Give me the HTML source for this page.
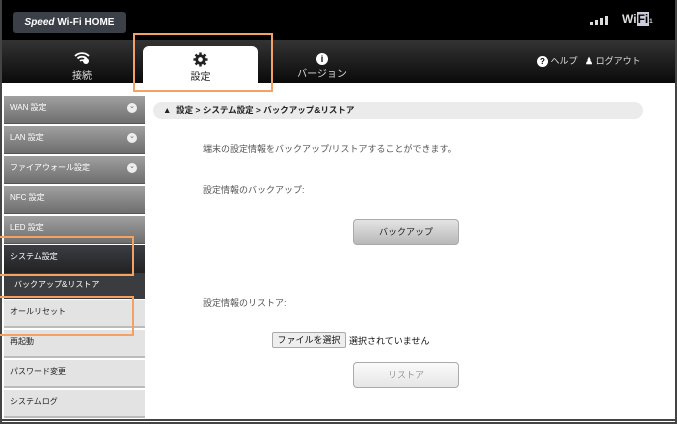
<!DOCTYPE html>
<html><head><meta charset="utf-8"><style>
*{margin:0;padding:0;box-sizing:border-box}
body{width:677px;height:424px;overflow:hidden;background:#fff;font-family:"Liberation Sans","Noto Sans CJK JP",sans-serif;position:relative}
.frame{position:absolute;left:0;top:0;width:677px;height:424px;border:2px solid #444;border-top:none}
.hdr{position:absolute;left:0;top:0;width:677px;height:40px;background:#000}
.logo{position:absolute;left:13px;top:12px;width:113px;height:21px;background:#3a3f48;border-radius:3px;color:#fff;font-size:10px;font-weight:bold;line-height:21px;text-align:center}
.nav{position:absolute;left:0;top:40px;width:677px;height:43px;background:linear-gradient(#333,#0a0a0a)}
.tab{position:absolute;color:#ddd;font-size:10px;text-align:center}
.act{position:absolute;left:143px;top:46px;width:115px;height:39px;background:#fff;border-radius:6px 6px 0 0}
.side{position:absolute;left:4px;width:141px;height:28px;font-size:8px;line-height:24px;padding-left:6px}
.g{background:linear-gradient(#a0a0a0,#6e6e6e);color:#fff;border-bottom:1px solid #555}
.d{background:linear-gradient(#3b3e44,#222);color:#fff}
.l{background:#e3e3e3;color:#222;border-bottom:2px solid #bbb}
.chev{position:absolute;right:8px;top:7px;width:10px;height:10px;border-radius:50%;background:#eee;color:#666;font-size:7px;line-height:8px;text-align:center}
.orange{position:absolute;border:2px solid #f4a264}
.t{position:absolute;font-size:9px;color:#555}
.btn{position:absolute;border:1px solid #aaa;border-radius:4px;font-size:9px;text-align:center}
.bar{position:absolute;background:#ddd;width:3px;bottom:0}
</style></head><body>
<div class="hdr"><div class="logo"><i>Speed</i> Wi-Fi HOME</div>
<div style="position:absolute;left:590px;top:16px;width:18px;height:9px">
<div class="bar" style="left:0;height:3px"></div><div class="bar" style="left:5px;height:5px"></div><div class="bar" style="left:10px;height:7px"></div><div class="bar" style="left:15px;height:9px"></div></div>
<div style="position:absolute;left:622px;top:12px;color:#ddd;font-size:12px;font-weight:bold">Wi<span style="background:#ccd;color:#000;padding:0 1px">Fi</span><span style="font-size:6px">1</span></div>
</div>
<div class="nav">
<div class="tab" style="left:62px;top:10px;width:40px"><svg width="18" height="14" viewBox="0 0 18 14"><path d="M2 6a10 10 0 0 1 14 0M4.5 8.5a6.5 6.5 0 0 1 9 0M7 11a3 3 0 0 1 4 0" stroke="#fff" stroke-width="1.8" fill="none"/><circle cx="13" cy="11" r="3" fill="#fff"/></svg><br>接続</div>
<div class="tab" style="left:292px;top:13px;width:60px"><div style="display:inline-block;width:12px;height:12px;border-radius:50%;background:#fff;color:#000;font-size:9px;font-weight:bold;line-height:12px">i</div><br>バージョン</div>
<div style="position:absolute;left:537px;top:14px;color:#ddd;font-size:9px"><span style="display:inline-block;width:11px;height:11px;border-radius:50%;background:#fff;color:#000;text-align:center;font-weight:bold;line-height:11px;font-size:8px">?</span> ヘルプ &nbsp;&nbsp;<b style="color:#fff">♟</b> ログアウト</div>
</div>
<div class="act"><div style="text-align:center;margin-top:6px;height:15px"><svg width="15" height="15" viewBox="0 0 16 16"><g fill="#222"><circle cx="8" cy="8" r="5.5"/><rect x="6.7" y="0.5" width="2.6" height="15"/><rect x="0.5" y="6.7" width="15" height="2.6"/><rect x="6.7" y="0.5" width="2.6" height="15" transform="rotate(45 8 8)"/><rect x="6.7" y="0.5" width="2.6" height="15" transform="rotate(-45 8 8)"/></g><circle cx="8" cy="8" r="2.5" fill="#fff"/></svg></div><div style="text-align:center;font-size:10px;color:#222;margin-top:1px">設定</div></div>

<div class="side g" style="top:96px">WAN 設定<span class="chev">⌄</span></div>
<div class="side g" style="top:126px">LAN 設定<span class="chev">⌄</span></div>
<div class="side g" style="top:156px">ファイアウォール設定<span class="chev">⌄</span></div>
<div class="side g" style="top:186px">NFC 設定</div>
<div class="side g" style="top:216px">LED 設定</div>
<div class="side d" style="top:245px;height:28px">システム設定</div>
<div class="side d" style="top:273px;height:26px;line-height:24px;background:#3a3c40;padding-left:10px">バックアップ&amp;リストア</div>
<div class="side l" style="top:300px">オールリセット</div>
<div class="side l" style="top:330px">再起動</div>
<div class="side l" style="top:360px">パスワード変更</div>
<div class="side l" style="top:390px">システムログ</div>
<div style="position:absolute;left:0;top:419px;width:677px;height:5px;background:#fff;border-top:2px solid #444"></div>

<div style="position:absolute;left:153px;top:102px;width:490px;height:17px;background:#ebebeb;border-radius:9px;font-size:8.5px;font-weight:bold;color:#222;line-height:17px;padding-left:10px">▲ &nbsp;設定 &gt; システム設定 &gt; バックアップ&amp;リストア</div>
<div class="t" style="left:203px;top:142px">端末の設定情報をバックアップ/リストアすることができます。</div>
<div class="t" style="left:203px;top:183px">設定情報のバックアップ:</div>
<div class="btn" style="left:353px;top:219px;width:106px;height:26px;line-height:24px;background:linear-gradient(#e4e4e4,#b8b8b8);color:#222">バックアップ</div>
<div class="t" style="left:203px;top:296px">設定情報のリストア:</div>
<div class="btn" style="left:272px;top:332px;width:74px;height:16px;line-height:14px;border-radius:2px;background:#eee;color:#111">ファイルを選択</div>
<div class="t" style="left:349px;top:334px;color:#111">選択されていません</div>
<div class="btn" style="left:353px;top:362px;width:106px;height:26px;line-height:24px;background:linear-gradient(#fafafa,#e6e6e6);color:#999">リストア</div>

<div class="frame"></div>
<div class="orange" style="left:133px;top:33px;width:140px;height:59px"></div>
<div class="orange" style="left:-2px;top:236px;width:136px;height:40px"></div>
<div class="orange" style="left:-2px;top:296px;width:136px;height:40px"></div>
</body></html>
